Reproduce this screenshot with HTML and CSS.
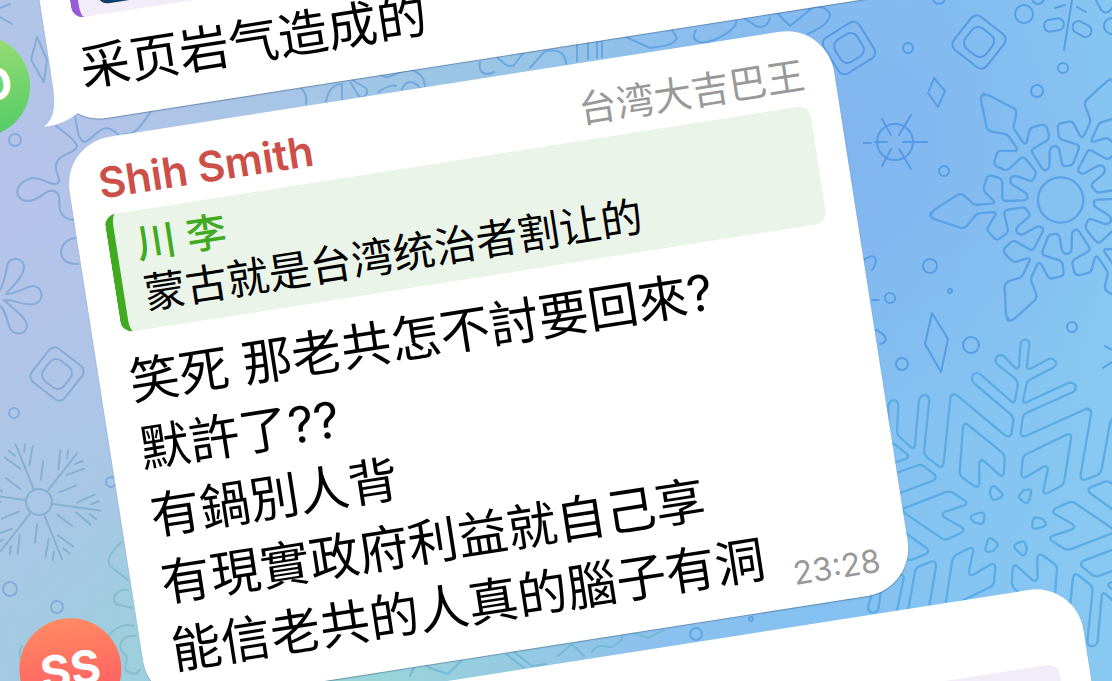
FILE: index.html
```
<!DOCTYPE html>
<html lang="zh">
<head>
  <meta charset="UTF-8">
  <title>Chat</title>
  <meta name="viewport" content="width=device-width, initial-scale=1.0">
  <link rel="stylesheet" href="styles.css">
</head>
<body>

  <!-- wallpaper -->
  <svg class="wallpaper" viewBox="0 0 1112 681" preserveAspectRatio="xMidYMid slice" aria-hidden="true">
    <defs>
      <linearGradient id="ink" x1="0" y1="0" x2="1112" y2="0" gradientUnits="userSpaceOnUse">
        <stop offset="0" stop-color="#86abd8"/>
        <stop offset="0.5" stop-color="#6ba7df"/>
        <stop offset="0.8" stop-color="#559ce5"/>
        <stop offset="1" stop-color="#559fe6"/>
      </linearGradient>
      <path id="crystal" d="M35 403Q35 395 45 388L112 345Q122 340 132 346L158 370Q163 375 175 374L215 371Q227 369 220 361L196 338Q189 331 192 320L199 296Q204 286 214 287L237 294Q248 299 247 310L247 352Q247 364 260 363L310 361Q325 360 322 348Q322 341 313 336L280 316Q268 308 272 296Q278 285 293 289L325 301Q337 305 341 297L346 285Q349 276 343 269L318 238Q309 228 300 236L270 264Q262 272 252 269L230 259Q220 254 224 242L231 220Q235 211 246 212L282 213Q295 213 289 202L268 172Q262 162 250 161L215 155Q203 152 200 142L183 62Q181 45 192 41"/>
      <path id="branch" d="M215 228Q222 220 232 227L374 345Q388 355 394 342L400 302Q401 290 391 282L285 192Q270 178 279 165Q288 153 301 163L392 243Q403 252 406 238L413 195Q414 184 405 175L352 133Q341 122 351 110Q361 100 373 110L404 142Q414 152 417 138L422 72Q424 59 436 59Q449 61 448 74L441 136Q439 150 452 146L504 118Q518 112 526 123Q533 134 520 143L452 178Q440 184 439 196L430 238Q428 252 441 246L562 190Q577 184 586 196Q592 208 579 216L441 278Q430 283 428 295L422 337Q421 353 437 348L618 267Q629 264 633 275"/>
      <path id="chevron" d="M440 402L560 344Q577 338 573 355L553 482Q551 493 542 499L503 519Q488 524 491 508L503 451Q505 436 490 440L440 470Q424 478 424 460L428 418Q430 407 440 402Z"/>
      <path id="gem" d="M431 511L446 508Q456 510 453 520L448 541Q443 553 433 547L420 537Q414 531 420 523Z"/>
      <g id="frost">
        <path d="M0-14V-62M-5-38L-15-54M5-38L15-54M-5-52L-9-59M5-52L9-59"/>
        <path d="M10-20L19-36"/>
      </g>
      <g id="tile">
        <rect x="-21" y="-21" width="42" height="42" rx="7"/>
        <rect x="-13" y="-13" width="26" height="26" rx="8"/>
      </g>
    </defs>

    <g fill="none" stroke="url(#ink)" stroke-width="2" stroke-linecap="round" stroke-linejoin="round">
      <!-- big crystal, right -->
      <g transform="translate(920 80) scale(0.3333)" stroke="#5aa1e6" stroke-width="7">
        <circle cx="422" cy="360" r="68"/>
        <use href="#crystal"/>
        <use href="#crystal" transform="rotate(60 422 360)"/>
        <use href="#crystal" transform="rotate(120 422 360)"/>
        <use href="#crystal" transform="rotate(180 422 360)"/>
        <use href="#crystal" transform="rotate(240 422 360)"/>
        <use href="#crystal" transform="rotate(300 422 360)"/>
      </g>

      <!-- large snowflake, bottom right -->
      <g transform="translate(880 320) scale(0.3333)" stroke="#5bace5" stroke-width="7">
        <g id="sector">
          <use href="#branch"/>
          <use href="#chevron"/>
          <use href="#gem"/>
        </g>
        <use href="#sector" transform="rotate(60 385 602)"/>
        <use href="#sector" transform="rotate(120 385 602)"/>
        <use href="#sector" transform="rotate(180 385 602)"/>
        <use href="#sector" transform="rotate(240 385 602)"/>
        <use href="#sector" transform="rotate(300 385 602)"/>
      </g>

      <!-- frost star, left -->
      <g transform="translate(39 502)" stroke="#86b0d3">
        <circle r="13"/>
        <use href="#frost" transform="rotate(-22)"/>
        <use href="#frost" transform="rotate(38)"/>
        <use href="#frost" transform="rotate(98)"/>
        <use href="#frost" transform="rotate(158)"/>
        <use href="#frost" transform="rotate(218)"/>
        <use href="#frost" transform="rotate(278)"/>
      </g>

      <use href="#tile" transform="translate(979 42) rotate(38)" stroke="#569ae6"/>
      <use href="#tile" transform="translate(849 48) rotate(58)" stroke="#569ae6"/>
      <use href="#tile" transform="translate(57 374) rotate(38)" stroke="#86abd6"/>

      <!-- wheel -->
      <g transform="translate(895 142)" stroke="#569ae6">
        <circle r="18"/>
        <path d="M8 0H32M-8 0H-20M-24 1H-31M4-7L16-27M-4-7L-13-23M-4 7L-13 24M4 7L16 27"/>
      </g>

      <!-- diamonds -->
      <path d="M934 78L945 91L938 107L928 93Z"/>
      <path d="M932 313L948 339L941 372L925 344Z"/>
      <path d="M37 37L47 60L44 82L31 60Z"/>

      <!-- left petals -->
      <path d="M0 290C6 280 6 268 8 263C13 256 24 258 24 268C23 278 12 286 6 294C18 294 26 286 34 286C44 288 44 302 34 304C24 306 16 300 4 300C14 310 26 316 27 326C26 336 12 336 9 326C6 316 4 308 0 306"/>
      <path d="M0 8L10 4M0 17L12 24"/>

      <!-- blob flake behind the second message -->
      <path d="M56 126C64 132 76 140 77 146C76 154 60 152 56 164C54 174 64 180 56 184C46 184 42 177 32 178C14 182 12 200 28 201C42 200 44 189 54 191C64 195 56 208 62 214Q66 220 74 220"/>
      <path d="M74 114C78 124 76 138 84 142C92 140 96 130 106 128C116 128 120 140 130 142M124 134C136 136 142 124 152 110"/>
      <path d="M75 238C62 240 58 252 64 260Q68 264 78 264"/>

      <!-- shapes between the first two messages -->
      <path d="M298 86Q308 92 306 104M326 102C328 88 336 84 342 84L342 100M350 82C356 90 358 98 362 98Q370 94 366 88L352 80M378 92C384 88 392 84 396 86M382 76C392 80 396 70 412 70Q424 74 425 86M402 90C404 82 412 78 420 88"/>
      <path d="M480 62C478 74 486 76 494 72M497 57C504 64 508 68 514 65L524 52M530 68L544 52C556 48 566 52 566 64M577 43V61M588 42V59M597 41V58M602 40V57"/>
      <path d="M624 36L650 48C660 46 674 46 677 38L668 24M696 30C690 40 698 46 714 40C728 34 738 26 736 20M744 18L756 26Q766 30 770 18M778 14L790 26L812 8Q824 4 830 14C830 24 816 30 808 34"/>

      <!-- bottom left curls -->
      <g stroke="#86bccd">
        <path d="M122 542C112 550 106 558 110 566L128 580M128 590C118 588 110 598 116 604L132 608M134 626C122 622 108 632 108 640M136 636C122 634 116 646 124 654C132 658 120 668 128 672C136 676 138 672 140 670"/>
        <path d="M22 646C18 652 20 660 24 664"/>
      </g>

      <!-- bottom strip -->
      <path stroke="#74b9d6" d="M410 676C414 664 420 660 430 668L448 674L462 660M506 654L524 668M514 652L532 666L546 664M558 656L572 644L584 656M592 652C600 640 608 650 614 646Q624 640 622 634M630 632L648 638L664 630"/>
      <circle cx="696" cy="634" r="6"/>
      <circle cx="751" cy="619" r="2"/>

      <!-- upper right ornament -->
      <path d="M1072 0L1064 50M1055 8L1065 5M1077 7L1086 12M1096 0L1101 10Q1107 16 1112 8"/>
      <rect x="-10" y="-6" width="20" height="12" rx="6" transform="translate(1054 25) rotate(-10)" stroke="#569ee6"/>
      <rect x="-10" y="-6" width="20" height="12" rx="6" transform="translate(1082 29) rotate(28)" stroke="#569ee6"/>
      <circle cx="1112" cy="26" r="8"/>

      <!-- snow dots -->
      <circle cx="939" cy="-2" r="6"/>
      <circle cx="908" cy="48" r="5"/>
      <circle cx="1024" cy="14" r="9"/>
      <circle cx="1038" cy="-2" r="6"/>
      <circle cx="1063" cy="68" r="5"/>
      <circle cx="1037" cy="91" r="6"/>
      <circle cx="944" cy="171" r="5"/>
      <circle cx="930" cy="266" r="7"/>
      <circle cx="950" cy="291" r="2"/>
      <circle cx="890" cy="298" r="5"/>
      <circle cx="971" cy="345" r="8"/>
      <circle cx="902" cy="364" r="6"/>
      <circle cx="1072" cy="327" r="5"/>
      <circle cx="15" cy="140" r="6"/>
      <circle cx="14" cy="413" r="5"/>
      <circle cx="10" cy="589" r="7"/>
      <circle cx="57" cy="607" r="6"/>
      <circle cx="111" cy="482" r="5"/>
      <path d="M864 260C874 252 880 258 872 270M872 300H879M876 330C886 334 890 342 880 344M1105 346L1112 350M1103 368L1112 362"/>
    </g>
  </svg>

  <main class="chat">

    <div class="message">
      <div class="avatar green">DD</div>
      <div class="bubble wide">
        <div class="header"></div>
        <div class="quote purple">
          <div class="thumb"></div>
        </div>
        <div class="content">
          <p class="text">采页岩气造成的</p>
        </div>
        <svg class="tail" viewBox="0 0 44 54" aria-hidden="true">
          <path d="M15 0C15 24 16 44 0 53C14 54 27 50 36 44L44 20Z" fill="#fff"/>
        </svg>
      </div>
    </div>

    <div class="message">
      <div class="avatar red">SS</div>
      <div class="bubble">
        <div class="header">
          <span class="name">Shih Smith</span>
          <span class="rank">台湾大吉巴王</span>
        </div>
        <blockquote class="quote">
          <p class="quote-name">川 李</p>
          <p>蒙古就是台湾统治者割让的</p>
        </blockquote>
        <div class="content">
          <p class="text">笑死 那老共怎不討要回來?<br>默許了??<br>有鍋別人背<br>有現實政府利益就自己享<br>能信老共的人真的腦子有洞</p>
          <time class="time">23:28</time>
        </div>
      </div>
    </div>

    <div class="message">
      <div class="avatar"></div>
      <div class="bubble wide">
        <div class="header"></div>
        <div class="quote purple"></div>
      </div>
    </div>

  </main>

</body>
</html>
```
FILE: styles.css
```
* {
  box-sizing: border-box;
}

body {
  margin: 0;
  min-height: 100vh;
  overflow: hidden;
  position: relative;
  font-family: Inter, 'Noto Sans CJK SC', sans-serif;
  background-color: #8cc6ec;
  background-image:
    radial-gradient(circle at 0% 28%, #b6c2ea 0%, rgba(182, 194, 234, 0) 36%),
    radial-gradient(circle at 28% 104%, #98d8d4 0%, rgba(152, 216, 212, 0) 30%),
    radial-gradient(circle at 76% 22%, #82b5ef 0%, rgba(130, 181, 239, 0) 30%),
    linear-gradient(100deg, #a9cae2 0%, #9ac5e6 40%, #84c0f1 75%, #88c9f1 100%);
}

p,
blockquote {
  margin: 0;
}

.wallpaper {
  position: absolute;
  inset: 0;
  width: 100%;
  height: 100%;
}

/* the whole conversation is tilted */
.chat {
  height: 100vh;
  display: flex;
  flex-direction: column;
  gap: 19px;
  transform-origin: 0 0;
  transform: rotate(-8.9deg) translate(-85px, -166px);
}

.message {
  display: flex;
  align-items: flex-end;
  gap: 22px;
}

.avatar {
  width: 102px;
  height: 102px;
  flex-shrink: 0;
  border-radius: 50%;
  display: flex;
  align-items: center;
  justify-content: center;
  color: white;
  font-size: 46px;
  font-weight: 700;
}

.avatar.green {
  background: linear-gradient(#9add72, #54cb68);
}

.avatar.red {
  background: linear-gradient(#ff8a62, #ff5463);
}

.bubble {
  position: relative;
  flex-shrink: 0;
  padding: 0 30px 19px;
  background: white;
  border-radius: 48px;
  box-shadow: 0 1px 1px rgba(50, 90, 130, 0.5);
}

.bubble.wide {
  width: 84vw;
}

.header {
  height: 77px;
  display: flex;
  justify-content: space-between;
  align-items: baseline;
  line-height: 90px;
}

.name {
  color: #cc5049;
  font-size: 42px;
  font-weight: 600;
}

.rank {
  color: #999;
  font-size: 38px;
  font-weight: 400;
}

.quote {
  min-height: 119px;
  padding: 9px 20px;
  border-left: 8px solid #40aa20;
  border-radius: 12px;
  background: #eaf4e8;
  font-size: 42px;
  line-height: 50px;
}

.quote.purple {
  border-left-color: #955bdb;
  background: #f3ecf9;
}

.quote-name {
  color: #40aa20;
  font-size: 40px;
  font-weight: 500;
}

.thumb {
  width: 100px;
  height: 100px;
  border-radius: 10px;
  background: #123f69;
}

.content {
  display: flex;
  align-items: flex-end;
  justify-content: space-between;
  gap: 26px;
  padding-top: 16px;
}

.text {
  font-size: 50px;
  line-height: 68px;
  white-space: nowrap;
}

.time {
  color: #999;
  font-size: 32px;
  font-weight: 400;
  line-height: 28px;
}

.tail {
  position: absolute;
  left: -15px;
  bottom: 0;
  width: 44px;
  height: 54px;
}
```
